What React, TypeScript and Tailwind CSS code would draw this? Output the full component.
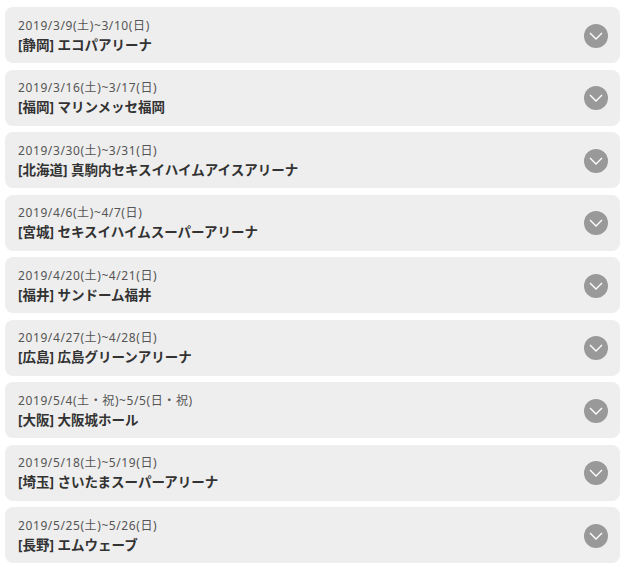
const events = [
  { date: "2019/3/9(土)~3/10(日)", title: "[静岡] エコパアリーナ" },
  { date: "2019/3/16(土)~3/17(日)", title: "[福岡] マリンメッセ福岡" },
  { date: "2019/3/30(土)~3/31(日)", title: "[北海道] 真駒内セキスイハイムアイスアリーナ" },
  { date: "2019/4/6(土)~4/7(日)", title: "[宮城] セキスイハイムスーパーアリーナ" },
  { date: "2019/4/20(土)~4/21(日)", title: "[福井] サンドーム福井" },
  { date: "2019/4/27(土)~4/28(日)", title: "[広島] 広島グリーンアリーナ" },
  { date: "2019/5/4(土・祝)~5/5(日・祝)", title: "[大阪] 大阪城ホール" },
  { date: "2019/5/18(土)~5/19(日)", title: "[埼玉] さいたまスーパーアリーナ" },
  { date: "2019/5/25(土)~5/26(日)", title: "[長野] エムウェーブ" },
];

function Chevron() {
  return (
    <span className="mt-[1px] flex h-[24px] w-[24px] shrink-0 items-center justify-center rounded-full bg-[#999999]">
      <svg width="14" height="8" viewBox="0 0 14 8" fill="none">
        <path d="M1 1l6 6 6-6" stroke="#ffffff" strokeWidth="1.4" />
      </svg>
    </span>
  );
}

export default function App() {
  return (
    <div
      className="flex min-h-[567px] w-[629px] flex-col gap-[6.5px] bg-white pl-[5px] pr-[9px] pt-[7px]"
      style={{ fontFamily: '"Noto Sans", "Noto Sans CJK JP", sans-serif' }}
    >
      {events.map((e) => (
        <div
          key={e.title}
          className="flex h-[56px] items-center justify-between rounded-[8px] bg-[#eeeeee] pl-[13px] pr-[12px]"
        >
          <div className="flex flex-col">
            <span className="text-[12px] leading-[19px] tracking-[0.6px] text-[#555555]">{e.date}</span>
            <span className="text-[13.5px] font-bold leading-[20px] text-[#333333]">{e.title}</span>
          </div>
          <Chevron />
        </div>
      ))}
    </div>
  );
}
